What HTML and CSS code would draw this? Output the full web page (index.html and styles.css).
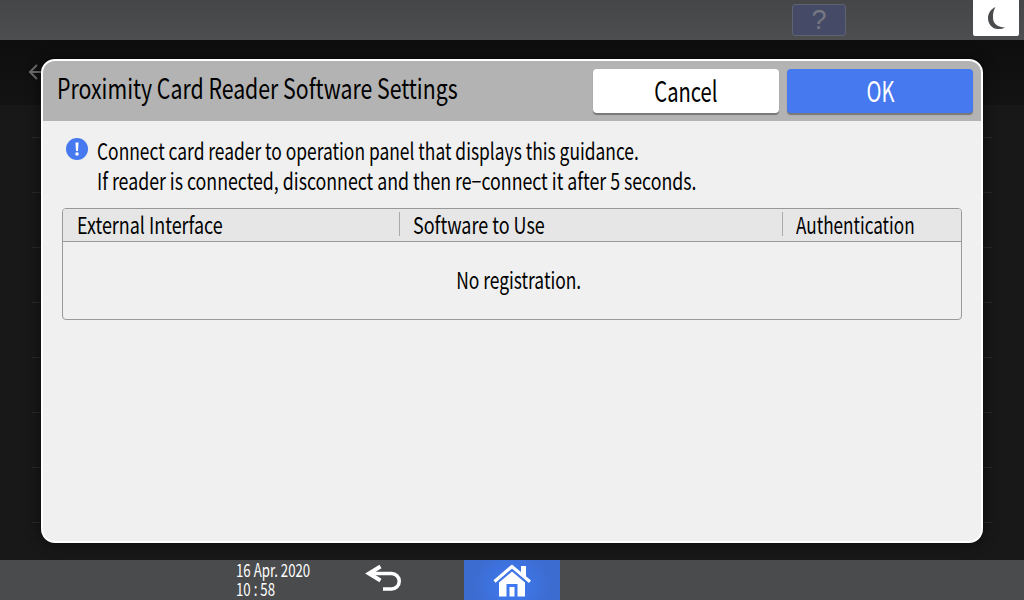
FILE: index.html
```html
<!DOCTYPE html>
<html lang="en">
<head>
<meta charset="utf-8">
<title>Proximity Card Reader Software Settings</title>
<link rel="stylesheet" href="styles.css">
</head>
<body>
<div class="screen">
  <header class="topbar">
    <div class="help">?</div>
    <div class="sleep">
      <svg width="22" height="24" viewBox="0 0 22 24"><path d="M10.500 1C5 3.500 3 8 3 12c0 6 4 11 10 11 3 0 5-.5 7-1.500-7 0-11.500-3.500-12-9C7.700 8 8.500 4 10.500 1z" fill="#4a4b4d"/></svg>
    </div>
  </header>
  <main class="backdrop">
    <div class="back-row">
      <svg class="back-arrow" width="16" height="18" viewBox="0 0 16 18"><path d="M15 9H2M9 2 2 9l7 7" fill="none" stroke="#6b6b6b" stroke-width="2"/></svg>
    </div>
    <div class="list">
      <div class="row first"></div>
      <div class="row"></div>
      <div class="row"></div>
      <div class="row"></div>
      <div class="row"></div>
      <div class="row"></div>
      <div class="row"></div>
      <div class="row"></div>
    </div>
    <section class="dialog">
      <div class="dialog-head">
        <h1 class="title"><span class="cn">Proximity Card Reader Software Settings</span></h1>
        <div class="actions">
          <button class="btn btn-cancel"><span class="cn cc btn-label">Cancel</span></button>
          <button class="btn btn-ok"><span class="cn cc btn-label">OK</span></button>
        </div>
      </div>
      <div class="dialog-body">
        <div class="notice">
          <svg class="notice-icon" width="22" height="22" viewBox="0 0 22 22"><circle cx="11" cy="11" r="11" fill="#4678f0"/><path d="M9.500 4.500h3l-.5 8.500h-2z" fill="#fff"/><circle cx="11" cy="16" r="1.800" fill="#fff"/></svg>
          <div class="notice-text">
            <div class="line"><span class="cn">Connect card reader to operation panel that displays this guidance.</span></div>
            <div class="line"><span class="cn wide">If reader is connected, disconnect and then re−connect it after 5 seconds.</span></div>
          </div>
        </div>
        <div class="table">
          <div class="thead">
            <div class="th th1"><span class="cn wider">External Interface</span></div>
            <div class="th th2"><span class="cn wider">Software to Use</span></div>
            <div class="th th3"><span class="cn narrow">Authentication</span></div>
          </div>
          <div class="tbody"><span class="cn cc">No registration.</span></div>
        </div>
      </div>
    </section>
  </main>
  <footer class="bottombar">
    <div class="clock">
      <div class="clock-line"><span class="cn">16 Apr. 2020</span></div>
      <div class="clock-line"><span class="cn">10 : 58</span></div>
    </div>
    <svg class="return" width="44" height="40" viewBox="0 0 44 40"><path d="M20.500 6.500 9 13.500l11.500 7" fill="none" stroke="#fff" stroke-width="4"/><path d="M10 13.500h21.500a7.500 7.500 0 0 1 0 15.500H23" fill="none" stroke="#fff" stroke-width="3.500"/></svg>
    <div class="home">
      <svg width="54" height="40" viewBox="0 0 54 40"><path d="M9.500 21.500 27 6.500l18 15.300" fill="none" stroke="#fff" stroke-width="3.200"/><path d="M36 6h5v11l-5-4z" fill="#fff"/><path fill-rule="evenodd" d="M14 22.500 27 11.500l13 11V36.500H14zM21.500 24v12.500h11V24zM24.500 27h5v9.500h-5z" fill="#fff"/></svg>
    </div>
  </footer>
</div>
</body>
</html>
```

FILE: styles.css
```css
* { box-sizing: border-box; }
html, body { margin: 0; padding: 0; }
body { width: 1024px; height: 600px; overflow: hidden; font-family: "Noto Sans CJK JP", "Noto Sans", sans-serif; color: #000; }

.cn { display: inline-block; white-space: nowrap; transform: scaleX(.756); transform-origin: left center; }
.cn.wide { transform: scaleX(.771); }
.cn.wider { transform: scaleX(.78); }
.cn.narrow { transform: scaleX(.745); }
.cn.btn-label { transform: scaleX(.72); }
.cc { transform-origin: center center; }

.screen { width: 1024px; height: 600px; display: flex; flex-direction: column; }

.topbar { height: 40px; background: linear-gradient(#454648, #4d4e50); display: flex; justify-content: flex-end; padding-right: 5px; }
.help { width: 54px; height: 32px; margin-top: 4px; margin-right: 127px; background: #454b66; border: 1px solid #5e6272; border-radius: 3px; color: #777982; font: 400 27px/30px "Liberation Sans", sans-serif; text-align: center; }
.sleep { width: 46px; height: 36px; background: #fff; border-radius: 0 0 2px 2px; display: flex; align-items: center; justify-content: center; }

.backdrop { position: relative; height: 520px; background: #181818; display: flex; flex-direction: column; }
.back-row { height: 65px; background: linear-gradient(#0e0e0e, #131313); padding: 23px 0 0 28px; }
.back-arrow { display: block; }
.list { padding: 0 32px; flex: 1; overflow: hidden; }
.row { height: 55px; border-bottom: 1px solid #2a2a2a; }
.row.first { height: 33px; }

.dialog { position: absolute; left: 41px; top: 19px; width: 942px; height: 484px; background: #f0f0f0; border: 2px solid #fff; border-radius: 14px; overflow: hidden; box-shadow: 0 0 14px rgba(0,0,0,.6); display: flex; flex-direction: column; }
.dialog-head { height: 60px; background: #b3b3b3; display: flex; justify-content: space-between; padding: 8px 8px 0 14px; flex: none; }
.title { margin: 0; font-size: 28px; font-weight: 400; line-height: 36px; width: 500px; }
.title .cn { transform: scaleX(.76); }
.actions { display: flex; gap: 8px; }
.btn { width: 186px; height: 44px; border: 0; border-radius: 4px; padding: 0 0 2px; font: inherit; font-size: 28px; line-height: 42px; box-shadow: 0 2px 1px #777; display: flex; justify-content: center; align-items: center; }
.btn-cancel { background: #fff; color: #000; }
.btn-ok { background: #4678f0; color: #fff; }

.dialog-body { flex: 1; padding: 14px 19px 0; }
.notice { display: flex; gap: 9px; margin-left: 4px; }
.notice-icon { flex: none; margin-top: 3px; }
.notice-text { font-size: 23px; line-height: 30px; }
.line { height: 30px; }

.table { margin-top: 13px; width: 900px; height: 112px; border: 1px solid #999; border-radius: 4px; overflow: hidden; display: flex; flex-direction: column; }
.thead { height: 33px; flex: none; background: #e6e6e6; border-bottom: 1px solid #999; display: flex; align-items: center; font-size: 23px; padding-bottom: 2px; }
.th { height: 24px; line-height: 24px; padding-left: 13px; border-left: 1px solid #aaa; }
.th1 { width: 336px; border-left: 0; padding-left: 14px; }
.th2 { width: 383px; }
.th3 { flex: 1; }
.tbody { flex: 1; display: flex; align-items: center; justify-content: center; font-size: 23px; padding: 0 0 3px 14px; }

.bottombar { height: 40px; background: #4a4b4d; display: flex; position: relative; }
.clock { margin-left: 236px; width: 124px; color: #fff; font-size: 18px; line-height: 19px; }
.clock .cn { transform: scaleX(.735); }
.clock-line { height: 19px; }
.return { display: block; }
.home { margin-left: 60px; width: 96px; height: 40px; background: radial-gradient(circle at 50% 65%, #3f7af5 0, #3c6ccf 70%); display: flex; align-items: center; justify-content: center; }
```
